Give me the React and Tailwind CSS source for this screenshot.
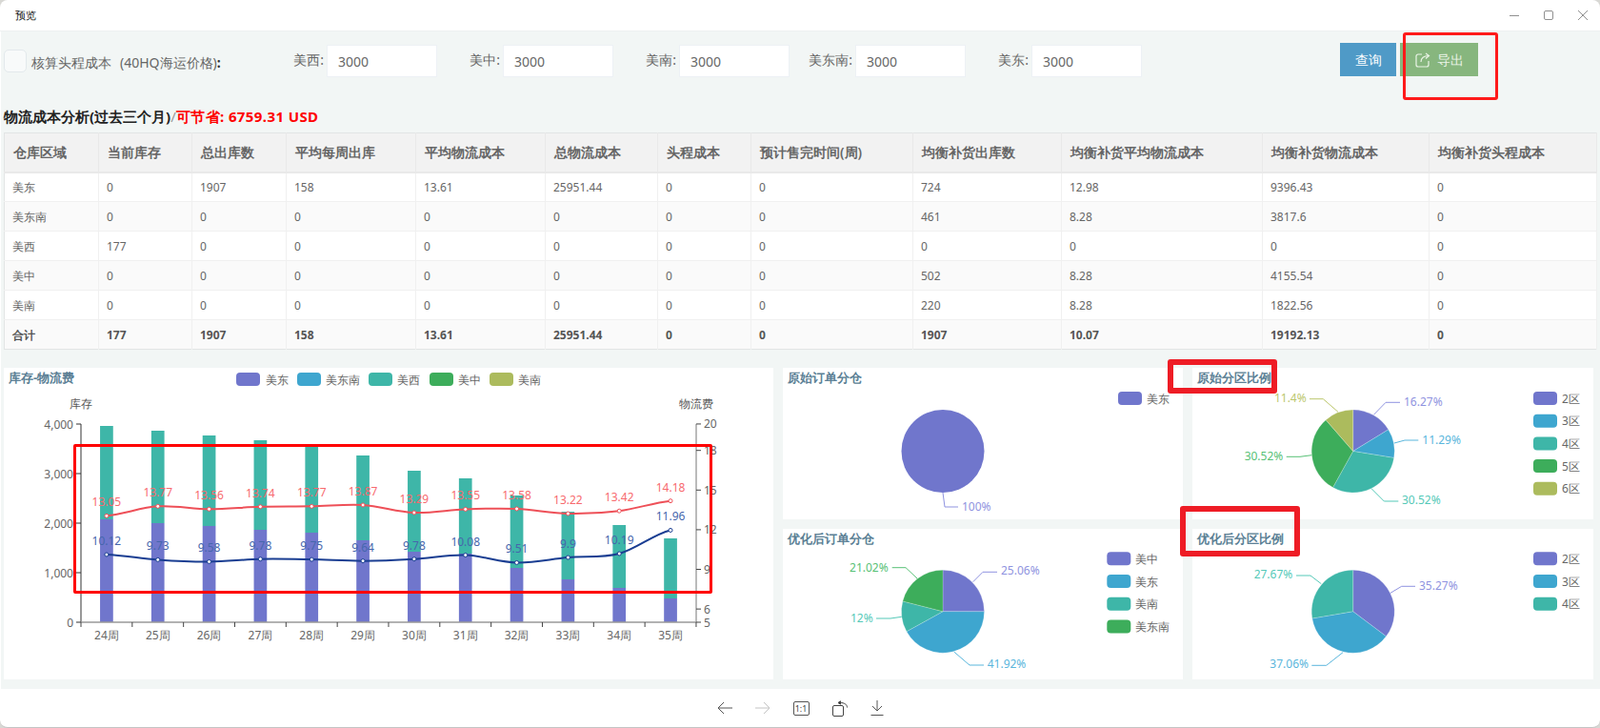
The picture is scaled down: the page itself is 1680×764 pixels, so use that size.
import React from "react";

const C = { purple: "#7076cc", blue: "#3ea6cf", teal: "#3eb6a8", green: "#3dad5b", olive: "#acbb5d" };
const L = { purple: "#8f93e0", blue: "#5ab6dc", teal: "#55c9b8", green: "#58c176", olive: "#bcc76d" };
const TXT = "#666666";

const widths = ["w-[99px]", "w-[98px]", "w-[99px]", "w-[136px]", "w-[136px]", "w-[118px]", "w-[98px]", "w-[170px]", "w-[156px]", "w-[211px]", "w-[175px]", "w-[176px]"];
const head = ["仓库区域", "当前库存", "总出库数", "平均每周出库", "平均物流成本", "总物流成本", "头程成本", "预计售完时间(周)", "均衡补货出库数", "均衡补货平均物流成本", "均衡补货物流成本", "均衡补货头程成本"];
const rows = [
  ["美东", "0", "1907", "158", "13.61", "25951.44", "0", "0", "724", "12.98", "9396.43", "0"],
  ["美东南", "0", "0", "0", "0", "0", "0", "0", "461", "8.28", "3817.6", "0"],
  ["美西", "177", "0", "0", "0", "0", "0", "0", "0", "0", "0", "0"],
  ["美中", "0", "0", "0", "0", "0", "0", "0", "502", "8.28", "4155.54", "0"],
  ["美南", "0", "0", "0", "0", "0", "0", "0", "220", "8.28", "1822.56", "0"],
];
const total = ["合计", "177", "1907", "158", "13.61", "25951.44", "0", "0", "1907", "10.07", "19192.13", "0"];

const weeks = ["24周", "25周", "26周", "27周", "28周", "29周", "30周", "31周", "32周", "33周", "34周", "35周"];
const barTop = [448, 453, 458, 463, 468, 479, 495, 503, 521, 538, 552, 566];
const purpleTop = [546, 550, 553, 557, 560, 568, 580, 582, 597, 609, 618, 629];
const navy = [10.12, 9.73, 9.58, 9.78, 9.75, 9.64, 9.78, 10.08, 9.51, 9.9, 10.19, 11.96];
const red = [13.05, 13.77, 13.56, 13.74, 13.77, 13.87, 13.29, 13.55, 13.58, 13.22, 13.42, 14.18];
const cx = (i) => 85 + 53.83 * (i + 0.5);
const ry = (v) => 654 - (v - 5) * 13.87;

function smooth(vals) {
  const p = vals.map((v, i) => [cx(i), ry(v)]);
  let d = `M${p[0][0]} ${p[0][1]}`;
  for (let i = 0; i < p.length - 1; i++) {
    const a = p[Math.max(i - 1, 0)], b = p[i], c = p[i + 1], e = p[Math.min(i + 2, p.length - 1)];
    d += ` C${b[0] + 18} ${b[1] + (c[1] - a[1]) * 0.17} ${c[0] - 18} ${c[1] - (e[1] - b[1]) * 0.17} ${c[0]} ${c[1]}`;
  }
  return d;
}

function Legend({ x, y, label, color, tx }) {
  return (
    <g>
      <rect x={x} y={y} width={25} height={14} rx={4} fill={color} />
      <text x={tx ?? x + 30} y={y + 7} fontSize={12} fill={TXT} dominantBaseline="central">{label}</text>
    </g>
  );
}

function Pie({ cxx, cyy, slices }) {
  let a = -Math.PI / 2;
  const r = 43.5;
  return (
    <g>
      {slices.map(([pct, col], i) => {
        const b = a + (pct / 100) * Math.PI * 2;
        const d = `M${cxx} ${cyy} L${cxx + r * Math.cos(a)} ${cyy + r * Math.sin(a)} A${r} ${r} 0 ${pct > 50 ? 1 : 0} 1 ${cxx + r * Math.cos(b)} ${cyy + r * Math.sin(b)} Z`;
        a = b;
        return <path key={i} d={d} fill={col} stroke="#ffffff" strokeOpacity={0.35} strokeWidth={0.6} />;
      })}
    </g>
  );
}

function PieLabel({ pts, text, color, x, y, anchor = "start" }) {
  return (
    <g>
      <polyline points={pts} fill="none" stroke={color} strokeWidth={1} />
      <text x={x} y={y} fontSize={12} fill={color} textAnchor={anchor} dominantBaseline="central">{text}</text>
    </g>
  );
}

function Panel({ title, children, viewBox, h }) {
  return (
    <div className="bg-white flex flex-col min-h-0 h-full">
      <div className="h-[22px] shrink-0 leading-[20px] pl-[5px] text-[13px] font-bold text-[#5b7f95]">{title}</div>
      <svg viewBox={viewBox} className={`block w-full ${h}`}>{children}</svg>
    </div>
  );
}

function Field({ label }) {
  return (
    <div className="w-[185px] flex items-center justify-end gap-[3px] mt-[14px]">
      <span className="text-[14px] text-[#666666] whitespace-nowrap -translate-y-[2px]">{label}:</span>
      <input defaultValue="3000" className="w-[116px] h-[34px] bg-white border border-[#edf1f5] pl-[11px] text-[14px] text-[#666666] outline-none" />
    </div>
  );
}

function MainChart() {
  return (
    <Panel title="库存-物流费" viewBox="4 409 808 305" h="h-[305px]">
      <text x={73} y={424} fontSize={12} fill="#555555" dominantBaseline="central">库存</text>
      <text x={713} y={424} fontSize={12} fill="#555555" dominantBaseline="central">物流费</text>
      {[0, 1, 2, 3, 4].map((k) => {
        const y = 654 - k * 52;
        return (
          <g key={k}>
            <line x1={80} x2={85} y1={y} y2={y} stroke="#333333" />
            <text x={77} y={y} fontSize={12} fill={TXT} textAnchor="end" dominantBaseline="central">{["0", "1,000", "2,000", "3,000", "4,000"][k]}</text>
          </g>
        );
      })}
      {weeks.map((w, i) => (
        <g key={w}>
          <rect x={cx(i) - 6.85} y={barTop[i]} width={13.7} height={purpleTop[i] - barTop[i]} fill={C.teal} />
          <rect x={cx(i) - 6.85} y={purpleTop[i]} width={13.7} height={654 - purpleTop[i]} fill={C.purple} />
        </g>
      ))}
      <line x1={85} x2={85} y1={446} y2={654} stroke="#333333" />
      <line x1={731} x2={731} y1={446} y2={654} stroke="#777777" />
      <line x1={85} x2={731} y1={654} y2={654} stroke="#999999" strokeWidth={1.5} />
      {Array.from({ length: 13 }).map((_, i) => (
        <line key={i} x1={85 + 53.83 * i} x2={85 + 53.83 * i} y1={654} y2={659} stroke="#444444" />
      ))}
      {weeks.map((w, i) => (
        <text key={w} x={cx(i)} y={667} fontSize={12} fill={TXT} textAnchor="middle" dominantBaseline="central">{w}</text>
      ))}
      {[20, 18, 15, 12, 9, 6, 5].map((v) => (
        <g key={v}>
          <line x1={731} x2={736} y1={ry(v)} y2={ry(v)} stroke="#444444" />
          <text x={739} y={ry(v)} fontSize={12} fill={TXT} dominantBaseline="central">{v}</text>
        </g>
      ))}
      <path d={smooth(red)} fill="none" stroke="#ee5058" strokeWidth={2} />
      <path d={smooth(navy)} fill="none" stroke="#1a3e92" strokeWidth={2} />
      {red.map((v, i) => (
        <g key={i}>
          <circle cx={cx(i)} cy={ry(v)} r={2} fill="#ffffff" stroke="#ee5058" />
          <text x={cx(i)} y={ry(v) - 14.5} fontSize={12} fill="#f76a6e" textAnchor="middle" dominantBaseline="central">{v}</text>
        </g>
      ))}
      {navy.map((v, i) => (
        <g key={i}>
          <circle cx={cx(i)} cy={ry(v)} r={2} fill="#ffffff" stroke="#1a3e92" />
          <text x={cx(i)} y={ry(v) - 14.5} fontSize={12} fill="#4666ac" textAnchor="middle" dominantBaseline="central">{v}</text>
        </g>
      ))}
    </Panel>
  );
}

function IconLeft() {
  return <svg width="16" height="14" viewBox="0 0 16 14" fill="none" stroke="#555555" strokeWidth="1"><path d="M16 7H1M7 1 1 7l6 6" /></svg>;
}
function IconRight() {
  return <svg width="16" height="14" viewBox="0 0 16 14" fill="none" stroke="#c4c4c4" strokeWidth="1"><path d="M0 7h15M9 1l6 6-6 6" /></svg>;
}
function IconOne() {
  return (
    <div className="w-[17px] h-[15px] border border-[#555555] rounded-[2px] flex items-center justify-center text-[9px] leading-none text-[#444444]">1:1</div>
  );
}
function IconRotate() {
  return (
    <svg width="16" height="17" viewBox="0 0 16 17" fill="none" stroke="#444444" strokeWidth="1">
      <rect x="0.5" y="5.5" width="11" height="11" rx="1.5" />
      <path d="M8.500 2.500C12 2.500 15.500 4 15.500 7.500" />
      <path d="M8.500 0.800 6 2.500 8.500 4.200Z" fill="#444444" />
    </svg>
  );
}
function IconDown() {
  return (
    <svg width="14" height="16" viewBox="0 0 14 16" fill="none" stroke="#555555" strokeWidth="1">
      <path d="M7 0v11M2 6l5 5 5-5M0.5 15.5h13" />
    </svg>
  );
}

export default function App() {
  return (
    <div className="relative w-[1680px] h-[764px] overflow-hidden bg-[#d8d8d4] font-['Noto_Sans','Noto_Sans_CJK_SC',sans-serif]">
      <div className="w-full h-full bg-white rounded-[8px] flex flex-col border-b border-[#c4c4c4]">
        <div className="h-[33px] shrink-0 flex items-center justify-between border-b border-[#eef1f1]">
          <span className="pl-[16px] text-[11px] text-[#111111]">预览</span>
          <div className="flex items-center pr-[13px] gap-[26px] text-[#888888]">
            <svg width="10" height="10" viewBox="0 0 10 10" stroke="#909090" fill="none"><path d="M0 5.5h10" /></svg>
            <svg width="10" height="10" viewBox="0 0 10 10" stroke="#909090" fill="none"><rect x="0.5" y="0.5" width="9" height="9" rx="1.5" /></svg>
            <svg width="10" height="10" viewBox="0 0 10 10" stroke="#909090" fill="none"><path d="M0 0l10 10M10 0 0 10" /></svg>
          </div>
        </div>

        <div className="flex-1 ml-[1px] pl-[3px] bg-[#f2f6f5] flex flex-col">
          <div className="h-[76px] flex items-start shrink-0">
            <div className="w-6 h-6 mt-[19px] rounded-[5px] bg-[#f8fafa] border border-[#e3e9ec]" />
            <div className="ml-[5px] w-[241px] mt-[23px] text-[14px] leading-[20px] text-[#666666] whitespace-pre">
              核算头程成本<span className="ml-[9px]">(40HQ海运价格)</span><b className="text-[#333333]">:</b>
            </div>
            <Field label="美西" />
            <Field label="美中" />
            <Field label="美南" />
            <Field label="美东南" />
            <Field label="美东" />
            <button className="ml-[208px] mt-[12px] w-[59px] h-[35px] bg-[#4f9ac7] text-white text-[14px]">查询</button>
            <button className="ml-[4px] mt-[12px] w-[82px] h-[35px] bg-[#87b67e] text-white text-[14px] flex items-center pl-[16px] gap-[7px]">
              <svg width="16" height="16" viewBox="0 0 16 16" fill="none" stroke="#eaf3e6" strokeWidth="1.2">
                <path d="M7 2H3a2 2 0 0 0-2 2v9a2 2 0 0 0 2 2h9a2 2 0 0 0 2-2V9" />
                <path d="M6 10c0-4 3-6.500 8-6.500" />
                <path d="M11 1l3.500 2.500L11 6.500" />
              </svg>
              <span className="text-[#eaf3e6]">导出</span>
            </button>
          </div>

          <div className="h-[26px] mb-[4px] flex items-center shrink-0 text-[15px] font-bold text-[#222222] whitespace-pre">
            物流成本分析(过去三个月)<span className="font-normal text-[#999999]">/</span><span className="text-[#ff0000] tracking-[0.4px]">可节省: 6759.31 USD</span>
          </div>

          <div className="h-[227px] shrink-0">
            <table className="table-fixed border-collapse w-[1673px] border border-[#e2e5e5] text-[12px] text-[#666666]">
              <thead>
                <tr className="h-[41px] bg-[#f2f2f2]">
                  {head.map((h, i) => (
                    <th key={h} className={`${widths[i]} text-left font-semibold text-[14px] leading-[18px] p-0 text-[#666666] pl-[9px] border-r border-b-2 border-[#e9e9e9] whitespace-nowrap overflow-hidden`}>{h}</th>
                  ))}
                </tr>
              </thead>
              <tbody>
                {rows.map((r, j) => (
                  <tr key={j} className={`h-[31px] ${j % 2 ? "bg-[#fafafa]" : "bg-white"}`}>
                    {r.map((c, i) => (
                      <td key={i} className="pl-[8px] pt-[1px] leading-[18px] border-r border-b border-[#f0f0f0]">{c}</td>
                    ))}
                  </tr>
                ))}
                <tr className="h-[31px] bg-[#fafafa] font-bold text-[#555555]">
                  {total.map((c, i) => (
                    <td key={i} className="pl-[8px] pt-[1px] leading-[18px] border-r border-[#f0f0f0]">{c}</td>
                  ))}
                </tr>
              </tbody>
            </table>
          </div>

          <div className="flex gap-[10px] mt-[20px] h-[327px] shrink-0">
            <div className="relative w-[808px]">
              <MainChart />
              <div className="absolute left-[244px] top-[4px] pointer-events-none">
                <svg width="320" height="16" viewBox="248 390 320 16" className="block">
                  <Legend x={248} y={391} label="美东" color={C.purple} tx={279} />
                  <Legend x={312} y={391} label="美东南" color={C.blue} tx={342} />
                  <Legend x={387} y={391} label="美西" color={C.teal} tx={417} />
                  <Legend x={451} y={391} label="美中" color={C.green} tx={481} />
                  <Legend x={514} y={391} label="美南" color={C.olive} tx={544} />
                </svg>
              </div>
            </div>
            <div className="grid grid-cols-[420px_421px] grid-rows-[159px_158px] gap-[10px]">
              <Panel title="原始订单分仓" viewBox="822 408 420 137" h="h-[137px]">
                <Legend x={1174} y={411} label="美东" color={C.purple} tx={1204} />
                <circle cx={990} cy={473.5} r={43.5} fill={C.purple} />
                <PieLabel pts="990,517 992,532 1006,532" text="100%" color={L.purple} x={1010} y={531} />
              </Panel>
              <Panel title="原始分区比例" viewBox="1252 408 421 137" h="h-[137px]">
                <Pie cxx={1420.7} cyy={473.5} slices={[[16.27, C.purple], [11.29, C.blue], [30.52, C.teal], [30.52, C.green], [11.4, C.olive]]} />
                <PieLabel pts="1442.7,435 1455,422.3 1470,422.3" text="16.27%" color={L.purple} x={1474} y={421.7} />
                <PieLabel pts="1464,465 1475,462 1489.3,462" text="11.29%" color={L.blue} x={1493.3} y={461.3} />
                <PieLabel pts="1440,512.7 1453.3,526 1468.3,526" text="30.52%" color={L.teal} x={1472} y={524.3} />
                <PieLabel pts="1377.3,477.7 1365,479.3 1350.7,479.3" text="30.52%" color={L.green} x={1347.3} y={478} anchor="end" />
                <PieLabel pts="1405,432.3 1389.3,418.7 1375,418.7" text="11.4%" color={L.olive} x={1371.7} y={417.7} anchor="end" />
                {[["2区", C.purple], ["3区", C.blue], ["4区", C.teal], ["5区", C.green], ["6区", C.olive]].map(([t, c], i) => (
                  <Legend key={t} x={1610} y={411 + i * 23.7} label={t} color={c} tx={1640} />
                ))}
              </Panel>
              <Panel title="优化后订单分仓" viewBox="822 577 420 136" h="h-[136px]">
                <Pie cxx={990} cyy={641.7} slices={[[25.06, C.purple], [41.92, C.blue], [12, C.teal], [21.02, C.green]]} />
                <PieLabel pts="1021.7,610.7 1032,600.3 1047,600.3" text="25.06%" color={L.purple} x={1051} y={598.7} />
                <PieLabel pts="1001.7,684 1018,698 1033,698" text="41.92%" color={L.blue} x={1036.7} y={696.7} />
                <PieLabel pts="946.7,647.3 935,649 920,649" text="12%" color={L.teal} x={916.7} y={648} anchor="end" />
                <PieLabel pts="963,607 951,595.7 936.7,595.7" text="21.02%" color={L.green} x={932.7} y={595} anchor="end" />
                {[["美中", C.purple], ["美东", C.blue], ["美南", C.teal], ["美东南", C.green]].map(([t, c], i) => (
                  <Legend key={t} x={1162.3} y={579.3 + i * 23.7} label={t} color={c} tx={1192} />
                ))}
              </Panel>
              <Panel title="优化后分区比例" viewBox="1252 577 421 136" h="h-[136px]">
                <Pie cxx={1420.7} cyy={641.7} slices={[[35.27, C.purple], [37.06, C.blue], [27.67, C.teal]]} />
                <PieLabel pts="1460,622.3 1471.7,615.3 1486,615.3" text="35.27%" color={L.purple} x={1490} y={614.7} />
                <PieLabel pts="1410,684.7 1392.7,698.3 1377.3,698.3" text="37.06%" color={L.blue} x={1374} y={696.7} anchor="end" />
                <PieLabel pts="1387.3,612.7 1376,604 1361,604" text="27.67%" color={L.teal} x={1357.3} y={602.7} anchor="end" />
                {[["2区", C.purple], ["3区", C.blue], ["4区", C.teal]].map(([t, c], i) => (
                  <Legend key={t} x={1610} y={579.3 + i * 23.7} label={t} color={c} tx={1640} />
                ))}
              </Panel>
            </div>
          </div>
        </div>

        <div className="h-[40px] shrink-0 flex items-center justify-center gap-[24px]">
          <IconLeft />
          <IconRight />
          <IconOne />
          <IconRotate />
          <IconDown />
        </div>
      </div>

      {/* hand-drawn red annotations over the screenshot */}
      <div className="absolute left-[1473px] top-[34px] w-[100px] h-[71px] border-[3px] border-[#ff1a1a] rounded-[3px] pointer-events-none" />
      <div className="absolute left-[77px] top-[466px] w-[671px] h-[157px] border-[3px] border-[#ff0000] rounded-[2px] pointer-events-none" />
      <div className="absolute left-[1226px] top-[377px] w-[115px] h-[36px] border-[6px] border-[#ee1c25] rounded-[3px] pointer-events-none" />
      <div className="absolute left-[1239px] top-[531px] w-[126px] h-[53px] border-[6px] border-[#ee1c25] rounded-[3px] pointer-events-none" />
    </div>
  );
}
